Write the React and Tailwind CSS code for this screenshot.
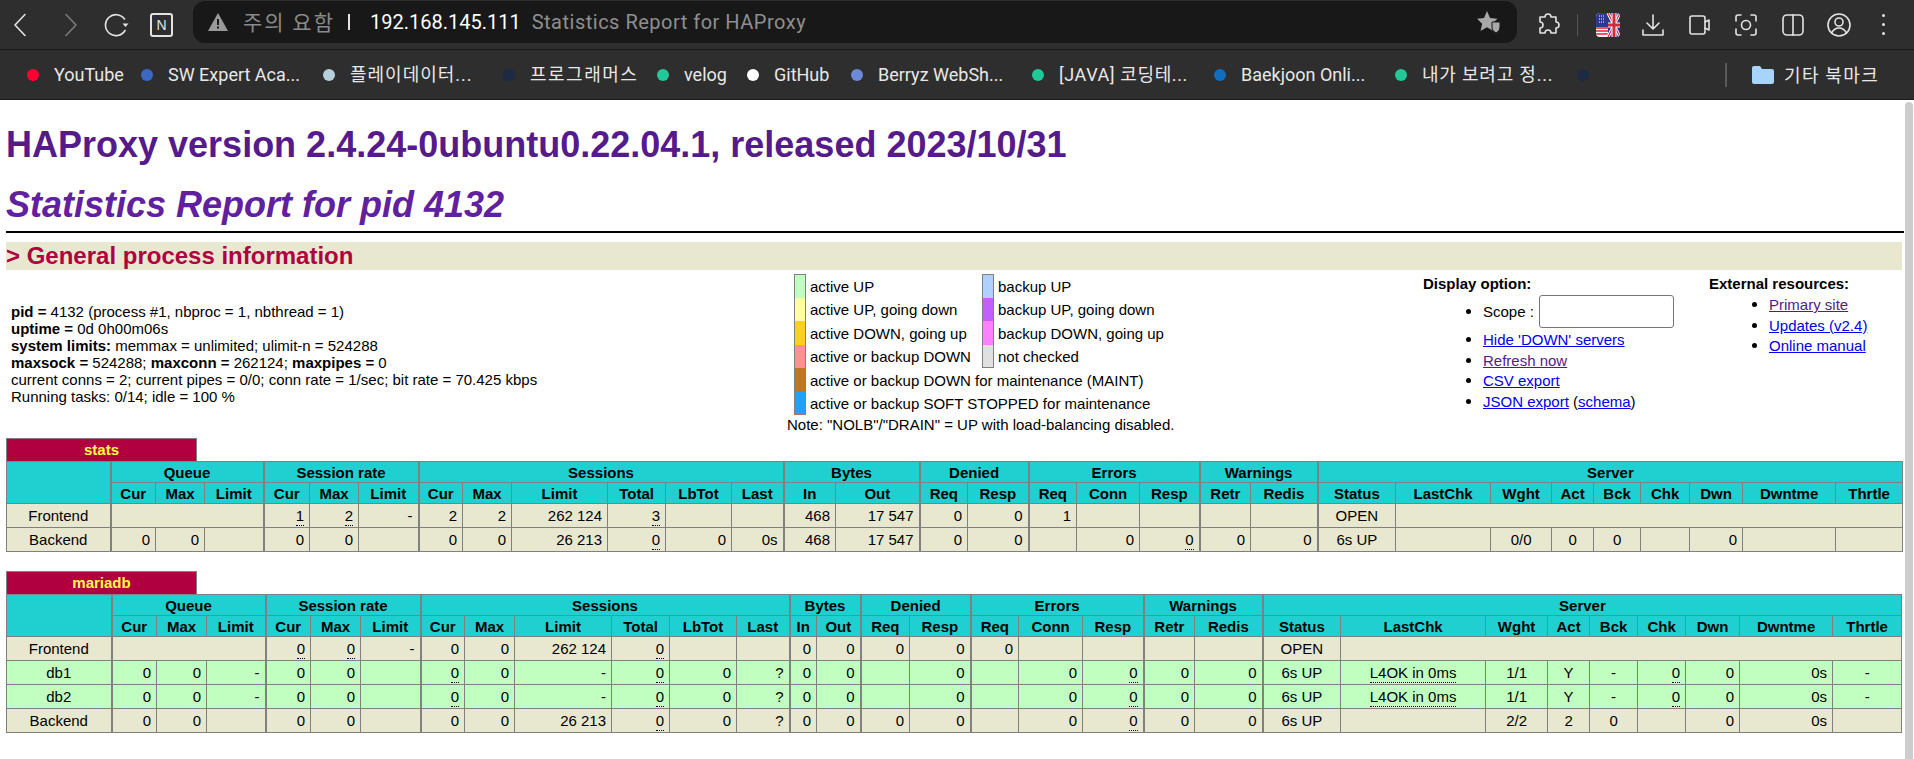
import React from 'react';

// column widths, one entry per column of each proxy table
const statsCols = ['w-[104px]','w-[45px]','w-[49px]','w-[59px]','w-[46px]','w-[49px]','w-[60px]','w-[44px]','w-[49px]','w-[96px]','w-[58px]','w-[66px]','w-[52px]','w-[52px]','w-[84px]','w-[48px]','w-[61px]','w-[48px]','w-[63px]','w-[60px]','w-[51px]','w-[67px]','w-[78px]','w-[95px]','w-[61px]','w-[42px]','w-[47px]','w-[49px]','w-[53px]','w-[93px]','w-[67px]'];
const mariaCols = ['w-[105px]','w-[45px]','w-[50px]','w-[59px]','w-[45px]','w-[50px]','w-[60px]','w-[44px]','w-[50px]','w-[97px]','w-[58px]','w-[67px]','w-[53px]','w-[27px]','w-[44px]','w-[49px]','w-[61px]','w-[48px]','w-[64px]','w-[61px]','w-[51px]','w-[68px]','w-[78px]','w-[145px]','w-[62px]','w-[42px]','w-[48px]','w-[48px]','w-[54px]','w-[93px]','w-[69px]'];

const groups = [['', 1], ['Queue', 3], ['Session rate', 3], ['Sessions', 6], ['Bytes', 2], ['Denied', 2], ['Errors', 3], ['Warnings', 2], ['Server', 9]];
const subHeads = ['Cur','Max','Limit','Cur','Max','Limit','Cur','Max','Limit','Total','LbTot','Last','In','Out','Req','Resp','Req','Conn','Resp','Retr','Redis','Status','LastChk','Wght','Act','Bck','Chk','Dwn','Dwntme','Thrtle'];
// first column of each group gets the heavier left rule
const groupStarts = [1, 4, 7, 13, 15, 17, 20, 22];

// u: = dotted underline, c: = centered. null cell = empty, {span} = merged empty cell
const S3 = { span: 3 };
const S8 = { span: 8 };
const statsRows = [
  { bg: 'bg-[#e8e8d0]', cells: ['c:Frontend', S3, 'u:1', 'u:2', '-', '2', '2', '262 124', 'u:3', null, null, '468', '17 547', '0', '0', '1', null, null, null, null, 'c:OPEN', S8] },
  { bg: 'bg-[#e8e8d0]', cells: ['c:Backend', '0', '0', null, '0', '0', null, '0', '0', '26 213', 'u:0', '0', '0s', '468', '17 547', '0', '0', null, '0', 'u:0', '0', '0', 'c:6s UP', null, 'c:0/0', 'c:0', 'c:0', null, '0', null, null] },
];
const server = (name) => ({
  bg: 'bg-[#c0ffc0]',
  cells: ['c:' + name, '0', '0', '-', '0', '0', null, 'u:0', '0', '-', 'u:0', '0', '?', '0', '0', null, '0', null, '0', 'u:0', '0', '0', 'c:6s UP', 'cu:L4OK in 0ms', 'c:1/1', 'c:Y', 'c:-', 'u:0', '0', '0s', 'c:-'],
});
const mariaRows = [
  { bg: 'bg-[#e8e8d0]', cells: ['c:Frontend', S3, 'u:0', 'u:0', '-', '0', '0', '262 124', 'u:0', null, null, '0', '0', '0', '0', '0', null, null, null, null, 'c:OPEN', S8] },
  server('db1'),
  server('db2'),
  { bg: 'bg-[#e8e8d0]', cells: ['c:Backend', '0', '0', null, '0', '0', null, '0', '0', '26 213', 'u:0', '0', '?', '0', '0', '0', '0', null, '0', 'u:0', '0', '0', 'c:6s UP', null, 'c:2/2', 'c:2', 'c:0', null, '0', '0s', null] },
];

const Cell = ({ value, heavy }) => {
  const rule = `border border-[#808080] ${heavy ? 'border-l-2' : ''}`;
  if (value === null) return <td className={rule} />;
  if (typeof value === 'object') return <td colSpan={value.span} className={rule} />;
  const centered = value.startsWith('c:') || value.startsWith('cu:');
  const dotted = value.startsWith('u:') || value.startsWith('cu:');
  const shown = value.includes(':') ? value.slice(value.indexOf(':') + 1) : value;
  return (
    <td className={`${rule} px-[5px] whitespace-nowrap ${centered ? 'text-center' : 'text-right'}`}>
      {dotted ? <span className="border-b border-dotted border-black pb-[1px]">{shown}</span> : shown}
    </td>
  );
};

const Row = ({ row }) => {
  let col = 0;
  return (
    <tr className={`h-[24px] ${row.bg}`}>
      {row.cells.map((c, j) => {
        const heavy = groupStarts.includes(col);
        col += c && c.span ? c.span : 1;
        return <Cell key={j} value={c} heavy={heavy} />;
      })}
    </tr>
  );
};

const ProxyTable = ({ name, cols, rows }) => (
  <div className="mb-[19px]">
    <div className="w-[191px] h-[23px] bg-[#b00040] border border-b-0 border-[#808080] text-[#ffff40] font-bold text-[15px] leading-[21px] text-center">{name}</div>
    <table className="table-fixed border-collapse w-[1896px] text-[15px] leading-[17px] text-black">
      <colgroup>{cols.map((c, i) => <col key={i} className={c} />)}</colgroup>
      <thead>
        <tr className="h-[21px] bg-[#20d0d0]">
          {groups.map(([label, span], i) => (
            <th key={i} colSpan={span} rowSpan={i === 0 ? 2 : 1} className={`border border-[#808080] font-bold text-center ${i > 0 ? 'border-l-2' : ''}`}>{label}</th>
          ))}
        </tr>
        <tr className="h-[21px] bg-[#20d0d0]">
          {subHeads.map((h, i) => (
            <th key={i} className={`border border-[#808080] font-bold text-center whitespace-nowrap overflow-hidden ${groupStarts.includes(i + 1) ? 'border-l-2' : ''}`}>{h}</th>
          ))}
        </tr>
      </thead>
      <tbody>
        {rows.map((r, i) => <Row key={i} row={r} />)}
      </tbody>
    </table>
  </div>
);

const legendLeft = [
  ['bg-[#c0ffc0]', 'active UP'],
  ['bg-[#ffffa0]', 'active UP, going down'],
  ['bg-[#ffd020]', 'active DOWN, going up'],
  ['bg-[#ff9090]', 'active or backup DOWN'],
  ['bg-[#c07820]', 'active or backup DOWN for maintenance (MAINT)'],
  ['bg-[#20a0ff]', 'active or backup SOFT STOPPED for maintenance'],
];
const legendRight = [
  ['bg-[#b0d0ff]', 'backup UP'],
  ['bg-[#c060ff]', 'backup UP, going down'],
  ['bg-[#ff80ff]', 'backup DOWN, going up'],
  ['bg-[#e0e0e0]', 'not checked'],
];

const Legend = ({ items }) => (
  <div className="border-t border-transparent">
    {items.map(([bg, label], i) => (
      <div key={label} className="flex items-center h-[23.5px] whitespace-nowrap">
        <span className={`w-[12px] h-full shrink-0 border-x border-[#808080] ${bg} ${i === 0 ? 'border-t' : ''} ${i === items.length - 1 ? 'border-b' : ''}`} />
        <span className="ml-[4px] mt-[1px]">{label}</span>
      </div>
    ))}
  </div>
);

const Link = ({ visited, children }) => (
  <a className={`underline ${visited ? 'text-[#551a8b]' : 'text-[#0000ee]'}`}>{children}</a>
);

const Bullet = ({ children, className }) => (
  <li className={`flex items-center ${className}`}>
    <span className="w-[5px] h-[5px] rounded-full bg-black mr-[12px] shrink-0" />
    {children}
  </li>
);

const GeneralInfo = () => (
  <div className="flex text-[15px] leading-[17px] text-black h-[168px]">
    <div className="w-[781px] pl-[5px] pt-[33px]">
      <p><b>pid = </b>4132 (process #1, nbproc = 1, nbthread = 1)</p>
      <p><b>uptime = </b>0d 0h00m06s</p>
      <p><b>system limits:</b> memmax = unlimited; ulimit-n = 524288</p>
      <p><b>maxsock = </b>524288; <b>maxconn = </b>262124; <b>maxpipes = </b>0</p>
      <p>current conns = 2; current pipes = 0/0; conn rate = 1/sec; bit rate = 70.425 kbps</p>
      <p>Running tasks: 0/14; idle = 100 %</p>
    </div>
    <div className="w-[636px] pt-[3px]">
      <div className="flex pl-[7px]">
        <div className="w-[188px]"><Legend items={legendLeft} /></div>
        <Legend items={legendRight} />
      </div>
      <p className="leading-[20px]">Note: &quot;NOLB&quot;/&quot;DRAIN&quot; = UP with load-balancing disabled.</p>
    </div>
    <div className="w-[286px] pt-[5px]">
      <p className="font-bold">Display option:</p>
      <ul className="pl-[43px] mt-[2px]">
        <Bullet className="h-[35px]">
          <span>Scope :</span>
          <span className="ml-[5px] w-[135px] h-[33px] rounded-[3px] border border-[#767676] bg-white" />
        </Bullet>
        <Bullet className="h-[21px]"><Link>Hide 'DOWN' servers</Link></Bullet>
        <Bullet className="h-[20px]"><Link visited>Refresh now</Link></Bullet>
        <Bullet className="h-[21px]"><Link>CSV export</Link></Bullet>
        <Bullet className="h-[21px]"><span><Link>JSON export</Link> (<Link>schema</Link>)</span></Bullet>
      </ul>
    </div>
    <div className="pt-[5px]">
      <p className="font-bold">External resources:</p>
      <ul className="pl-[43px] mt-[2px]">
        <Bullet className="h-[21px]"><Link visited>Primary site</Link></Bullet>
        <Bullet className="h-[20px]"><Link>Updates (v2.4)</Link></Bullet>
        <Bullet className="h-[21px]"><Link>Online manual</Link></Bullet>
      </ul>
    </div>
  </div>
);

const StrokeIcon = ({ children, className, w = 24, h = 24 }) => (
  <svg viewBox={`0 0 ${w} ${h}`} className={className} fill="none" stroke="currentColor" strokeWidth="1.6" strokeLinecap="round" strokeLinejoin="round">
    {children}
  </svg>
);

const FlagIcon = () => (
  <svg viewBox="0 0 24 24" className="w-[24px] h-[24px]">
    <clipPath id="flagClip"><rect x="0" y="0" width="24" height="24" rx="4" /></clipPath>
    <g clipPath="url(#flagClip)">
      <rect width="24" height="24" fill="#fff" />
      <rect x="0" y="0" width="12" height="14" fill="#2b3a8c" />
      <path d="M0 15h12M0 18h12M0 21h12" stroke="#d8263c" strokeWidth="1.6" />
      <rect x="12" y="0" width="12" height="24" fill="#2b3a8c" />
      <path d="M12 0L24 24M24 0L12 24" stroke="#fff" strokeWidth="3" />
      <path d="M12 0L24 24M24 0L12 24" stroke="#d8263c" strokeWidth="1.2" />
      <path d="M18 0V24M12 12H24" stroke="#fff" strokeWidth="5" />
      <path d="M18 0V24M12 12H24" stroke="#d8263c" strokeWidth="3" />
      <path d="M3 3h6M3 6h6M3 9h6" stroke="#fff" strokeWidth="1" strokeDasharray="1 1" />
    </g>
  </svg>
);

const Toolbar = () => (
  <div className="h-[50px] bg-[#2e2e2e] flex items-start text-[#e3e3e3] border-b border-[#1a1a1a]">
    <div className="w-[193px] h-full flex items-center pl-[13px]">
      <StrokeIcon className="w-[14px] h-[24px] mr-[37px]" w={14} h={24}><path d="M12 1.500L2 12l10 10.500" /></StrokeIcon>
      <StrokeIcon className="w-[14px] h-[24px] mr-[26px] text-[#7a7a7a]" w={14} h={24}><path d="M2 1.500L12 12 2 22.500" /></StrokeIcon>
      <StrokeIcon className="w-[26px] h-[24px] mr-[20px]" w={26} h={24}>
        <path d="M21 17.500A10.500 10.500 0 1 1 20.500 6" />
        <path d="M18.500 10.500h6l-3 3.500z" fill="currentColor" stroke="none" />
      </StrokeIcon>
      <div className="w-[23px] h-[24px] rounded-[3px] border-2 border-[#e3e3e3] flex items-center justify-center font-['Liberation_Sans',sans-serif] text-[14px] leading-none">N</div>
    </div>
    <div className="w-[1324px] h-[42px] mt-[1px] rounded-[12px] bg-[#181818] flex items-center pl-[15px] pr-[16px] font-['Roboto',sans-serif] text-[20px]">
      <svg viewBox="0 0 20 18" className="w-[20px] h-[18px] text-[#9a9a9a]" fill="currentColor">
        <path d="M10 0L20 18H0z" />
        <path d="M9 6h2v6H9zM9 13.500h2v2H9z" fill="#181818" />
      </svg>
      <span className="ml-[15px] w-[105px] whitespace-nowrap text-[#8a8a8a] font-['Noto_Sans_CJK_KR',sans-serif] text-[21px] tracking-[2px]">주의 요함</span>
      <span className="w-[2px] h-[16px] bg-[#e3e3e3]" />
      <span className="ml-[20px] text-white">192.168.145.111</span>
      <span className="ml-[11px] text-[#8f8f8f] tracking-[0.5px]">Statistics Report for HAProxy</span>
      <svg viewBox="0 0 24 22" className="ml-auto w-[24px] h-[22px] text-[#a8a8a8]" fill="currentColor">
        <path d="M10 0l3 7 7.500.7-5.700 5 1.700 7.300-6.500-3.800L3.500 20l1.700-7.300L0 7.700 7 7z" />
        <path d="M15 11h8v5c0 3-2 5-4 6-2-1-4-3-4-6z" stroke="#181818" strokeWidth="1" />
      </svg>
    </div>
    <div className="flex-1 h-full flex items-center pl-[19px]">
      <StrokeIcon className="w-[24px] h-[24px]">
        <path d="M9 4a3 3 0 0 1 6 0h5v5a3 3 0 0 1 0 6v5h-5a3 3 0 0 0-6 0H4v-5a3 3 0 0 0 0-6V4z" />
      </StrokeIcon>
      <span className="ml-[17px] mr-[18px] w-[1px] h-[22px] bg-[#555]" />
      <FlagIcon />
      <StrokeIcon className="ml-[21px] w-[24px] h-[24px]"><path d="M12 2v14M6 10l6 6 6-6M2 17v5h20v-5" /></StrokeIcon>
      <StrokeIcon className="ml-[22px] w-[24px] h-[24px]">
        <path d="M5 3h11a2 2 0 0 1 2 2v14a2 2 0 0 1-2 2H5a2 2 0 0 1-2-2V5a2 2 0 0 1 2-2z" />
        <path d="M18 9l4-2v10l-4-2" />
      </StrokeIcon>
      <StrokeIcon className="ml-[23px] w-[24px] h-[24px]">
        <path d="M2 8V4a2 2 0 0 1 2-2h3M17 2h3a2 2 0 0 1 2 2v4M22 16v4a2 2 0 0 1-2 2h-3M7 22H4a2 2 0 0 1-2-2v-4" />
        <circle cx="12" cy="12" r="4.500" />
      </StrokeIcon>
      <StrokeIcon className="ml-[23px] w-[24px] h-[24px]">
        <rect x="2" y="2" width="20" height="20" rx="4" />
        <path d="M12 2v20" />
      </StrokeIcon>
      <StrokeIcon className="ml-[22px] w-[24px] h-[24px]">
        <circle cx="12" cy="12" r="11" />
        <circle cx="12" cy="9" r="4" />
        <path d="M4.500 20c2-3.500 4.500-5 7.500-5s5.500 1.500 7.500 5" />
      </StrokeIcon>
      <div className="ml-[31px] flex flex-col gap-[6px]">
        <span className="w-[3px] h-[3px] rounded-full bg-[#e3e3e3]" />
        <span className="w-[3px] h-[3px] rounded-full bg-[#e3e3e3]" />
        <span className="w-[3px] h-[3px] rounded-full bg-[#e3e3e3]" />
      </div>
    </div>
  </div>
);

const bookmarks = [
  ['bg-[#ff0033]', 'YouTube', 'w-[114px]', ''],
  ['bg-[#3b68c4]', 'SW Expert Aca...', 'w-[182px]', ''],
  ['bg-[#b5d0da]', '플레이데이터...', 'w-[180px]', 'tracking-[1px]'],
  ['bg-[#1c2a44]', '프로그래머스', 'w-[154px]', 'tracking-[1.5px]'],
  ['bg-[#20c997]', 'velog', 'w-[90px]', ''],
  ['bg-[#ffffff]', 'GitHub', 'w-[104px]', ''],
  ['bg-[#6d8ad8]', 'Berryz WebSh...', 'w-[181px]', ''],
  ['bg-[#20c997]', '[JAVA] 코딩테...', 'w-[182px]', 'tracking-[0.6px]'],
  ['bg-[#0f6fbd]', 'Baekjoon Onli...', 'w-[181px]', ''],
  ['bg-[#20c997]', '내가 보려고 정...', 'w-[182px]', 'tracking-[0.8px]'],
  ['bg-[#1c2a44]', '', 'w-[148px]', ''],
];

const BookmarkBar = () => (
  <div className="h-[50px] bg-[#2e2e2e] flex items-center pl-[27px] text-[#e8e8e8] text-[18px] font-['Roboto','Noto_Sans_CJK_KR',sans-serif] border-b border-[#1a1a1a]">
    {bookmarks.map(([dot, label, width, spacing], i) => (
      <div key={i} className={`flex items-center shrink-0 whitespace-nowrap ${width}`}>
        <span className={`w-[12px] h-[12px] shrink-0 rounded-full ${dot}`} />
        <span className={`ml-[15px] ${spacing}`}>{label}</span>
      </div>
    ))}
    <span className="w-[2px] h-[24px] bg-[#5a5a5a]" />
    <svg viewBox="0 0 22 18" className="ml-[25px] w-[22px] h-[18px]" fill="#a8d4fb">
      <path d="M0 2a2 2 0 0 1 2-2h6l2 3h10a2 2 0 0 1 2 2v11a2 2 0 0 1-2 2H2a2 2 0 0 1-2-2z" />
    </svg>
    <span className="ml-[10px] tracking-[1.4px] font-['Noto_Sans_CJK_KR',sans-serif]">기타 북마크</span>
  </div>
);

export default function App() {
  return (
    <div className="h-screen w-full flex flex-col overflow-hidden bg-white">
      <Toolbar />
      <BookmarkBar />
      <div className="flex-1 flex min-h-0 font-['Liberation_Sans',Arial,sans-serif]">
        <main className="w-[1905px] pl-[6px] pr-[1px] overflow-hidden">
          <h1 className="mt-[25px] text-[36px] leading-[40px] font-bold text-[#551a8b] whitespace-nowrap">
            HAProxy version 2.4.24-0ubuntu0.22.04.1, released 2023/10/31
          </h1>
          <h2 className="mt-[19px] text-[36px] leading-[42px] font-bold italic text-[#6020a0]">Statistics Report for pid 4132</h2>
          <hr className="mt-[5px] border-0 h-[2px] bg-black" />
          <h3 className="mt-[9px] mr-[2px] h-[28px] text-[24px] leading-[28px] font-bold text-[#b00040] bg-[#e8e8d0]">&gt; General process information</h3>
          <GeneralInfo />
          <ProxyTable name="stats" cols={statsCols} rows={statsRows} />
          <ProxyTable name="mariadb" cols={mariaCols} rows={mariaRows} />
        </main>
        <div className="w-[9px] pt-[2px]">
          <div className="w-[8px] h-full rounded-t-[4px] bg-[#cdcdcd]" />
        </div>
      </div>
    </div>
  );
}
